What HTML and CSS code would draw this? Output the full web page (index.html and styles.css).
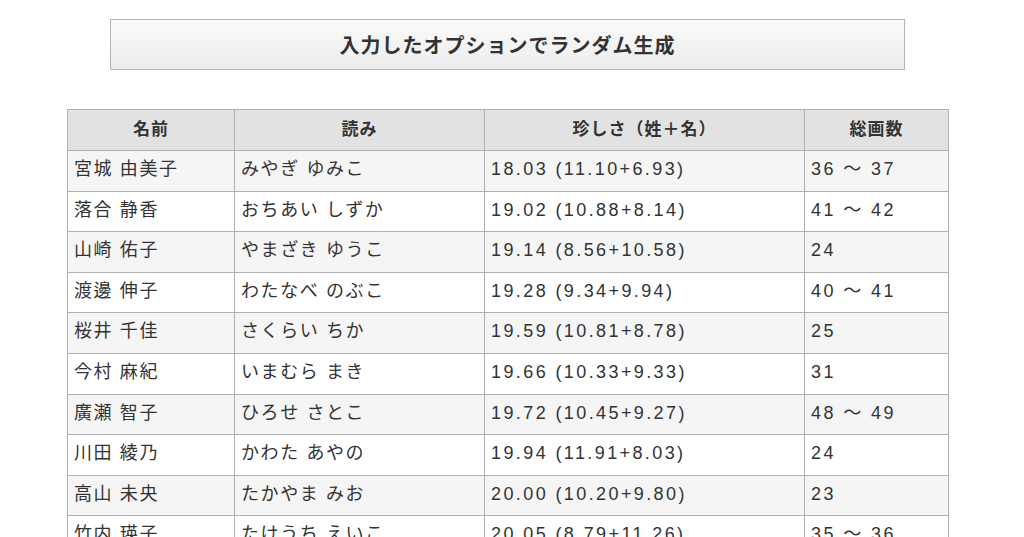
FILE: index.html
```html
<!DOCTYPE html>
<html lang="ja">
<head>
<meta charset="utf-8">
<link rel="stylesheet" href="styles.css">
</head>
<body>
<div class="page">
  <div class="gen-btn">入力したオプションでランダム生成</div>
  <table class="names">
    <thead>
      <tr><th class="c1">名前</th><th class="c2">読み</th><th class="c3">珍しさ（姓＋名）</th><th class="c4">総画数</th></tr>
    </thead>
    <tbody>
      <tr><td>宮城 由美子</td><td>みやぎ ゆみこ</td><td class="num">18.03 (11.10+6.93)</td><td class="num">36 ～ 37</td></tr>
      <tr><td>落合 静香</td><td>おちあい しずか</td><td class="num">19.02 (10.88+8.14)</td><td class="num">41 ～ 42</td></tr>
      <tr><td>山崎 佑子</td><td>やまざき ゆうこ</td><td class="num">19.14 (8.56+10.58)</td><td class="num">24</td></tr>
      <tr><td>渡邊 伸子</td><td>わたなべ のぶこ</td><td class="num">19.28 (9.34+9.94)</td><td class="num">40 ～ 41</td></tr>
      <tr><td>桜井 千佳</td><td>さくらい ちか</td><td class="num">19.59 (10.81+8.78)</td><td class="num">25</td></tr>
      <tr><td>今村 麻紀</td><td>いまむら まき</td><td class="num">19.66 (10.33+9.33)</td><td class="num">31</td></tr>
      <tr><td>廣瀬 智子</td><td>ひろせ さとこ</td><td class="num">19.72 (10.45+9.27)</td><td class="num">48 ～ 49</td></tr>
      <tr><td>川田 綾乃</td><td>かわた あやの</td><td class="num">19.94 (11.91+8.03)</td><td class="num">24</td></tr>
      <tr><td>高山 未央</td><td>たかやま みお</td><td class="num">20.00 (10.20+9.80)</td><td class="num">23</td></tr>
      <tr><td>竹内 瑛子</td><td>たけうち えいこ</td><td class="num">20.05 (8.79+11.26)</td><td class="num">35 ～ 36</td></tr>
    </tbody>
  </table>
</div>
</body>
</html>
```

FILE: styles.css
```css
html, body {
  margin: 0;
  padding: 0;
  background: #fff;
}
.page {
  padding-top: 19px;
  font-family: "Liberation Sans", "Noto Sans CJK JP", sans-serif;
  color: #333;
}
.gen-btn {
  box-sizing: border-box;
  width: 795px;
  height: 51px;
  margin-left: 110px;
  border: 1px solid #b4b4b4;
  background: linear-gradient(#fbfbfb, #ececec);
  display: flex;
  align-items: center;
  justify-content: center;
  font-family: "Noto Sans CJK JP", sans-serif;
  font-size: 20px;
  font-weight: bold;
  letter-spacing: 1px;
  color: #333;
}
.names {
  margin-top: 39px;
  margin-left: 67px;
  width: 882px;
  border-collapse: collapse;
  font-size: 18px;
}
.names th, .names td {
  border: 1px solid #b0b0b0;
  padding: 0 6px;
  text-align: left;
  letter-spacing: 1.6px;
  line-height: 1.2;
}
.names th {
  background: #e2e2e2;
  height: 40px;
  text-align: center;
  font-size: 17px;
  font-weight: bold;
  letter-spacing: 1px;
}
.names td {
  height: 37.6px;
  padding-top: 0;
  padding-bottom: 2px;
}
.names td.num {
  letter-spacing: 2.4px;
}
.names tbody tr:nth-child(odd) td {
  background: #f5f5f5;
}
.names .c1 { width: 154px; }
.names .c2 { width: 237px; }
.names .c3 { width: 307px; }
```
